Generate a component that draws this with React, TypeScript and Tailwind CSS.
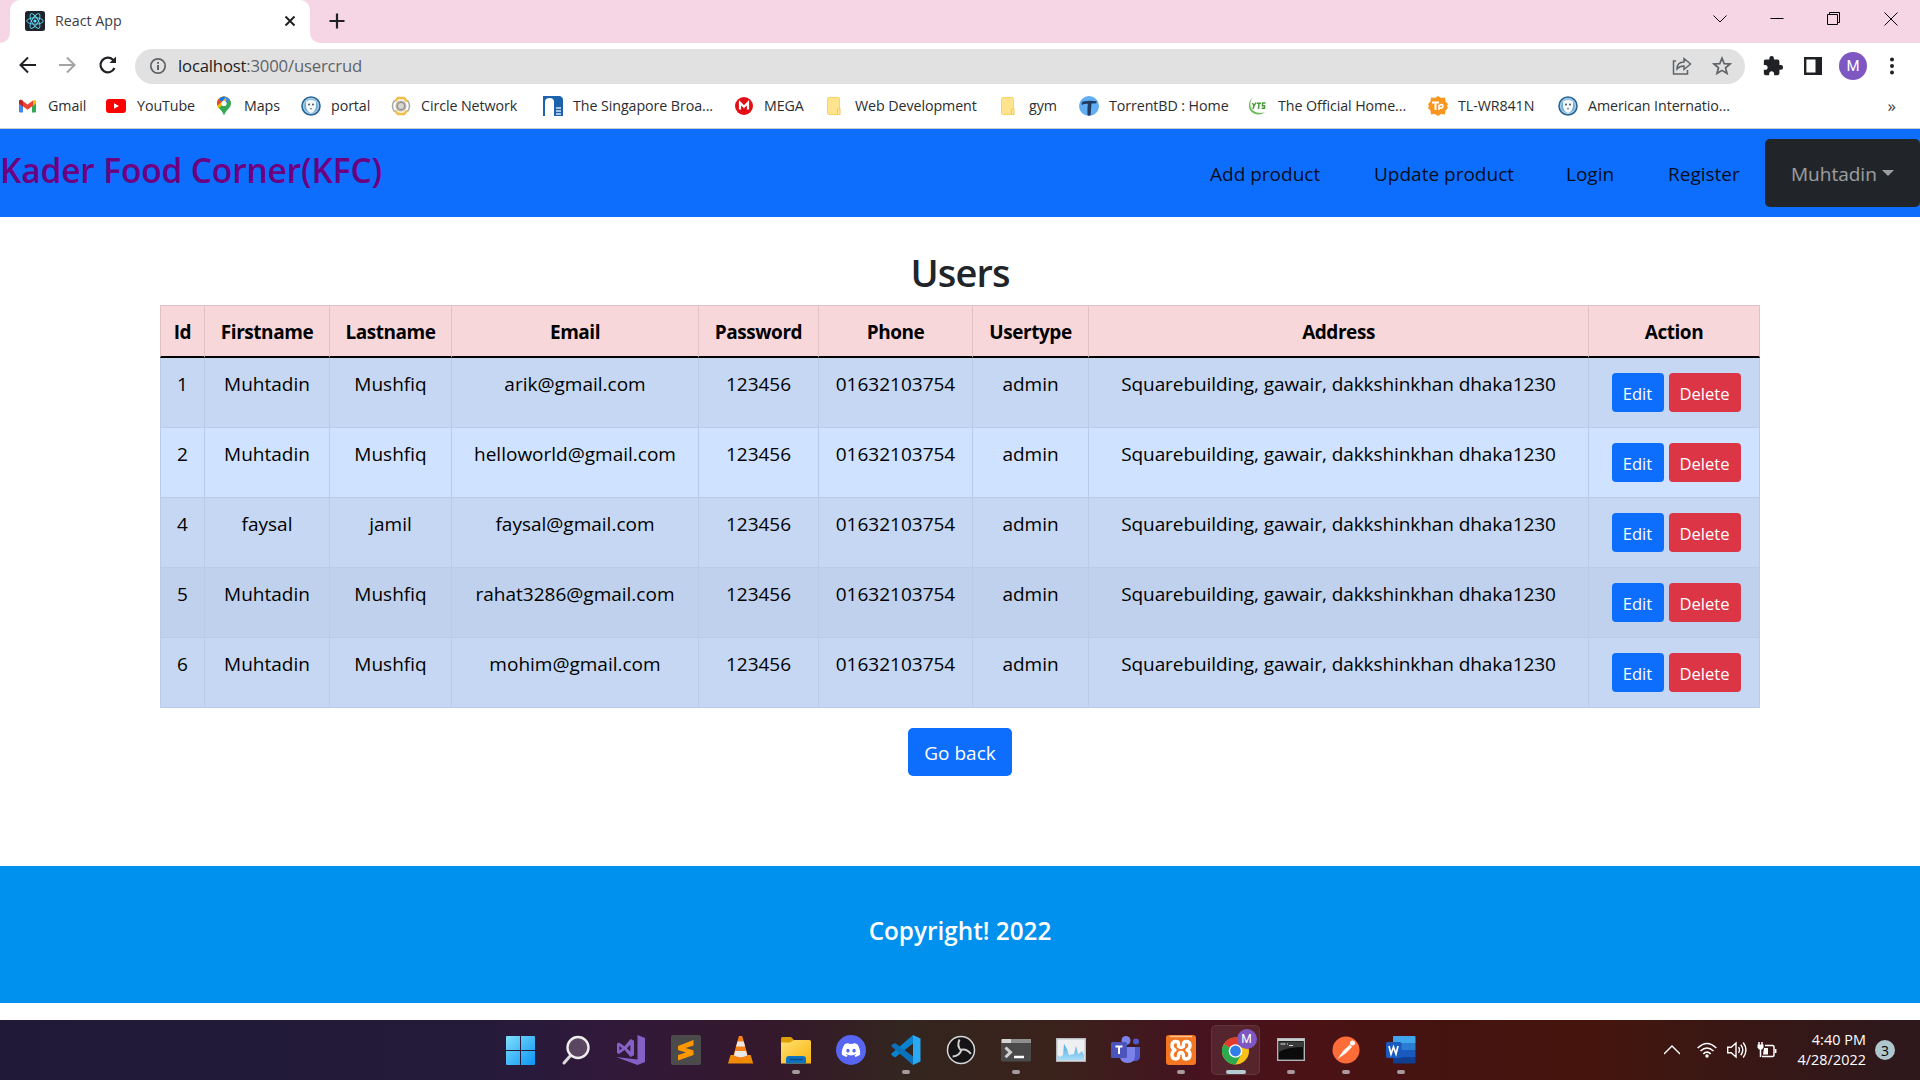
import React from "react";
import { MdExtension } from "react-icons/md";
import { FaDiscord } from "react-icons/fa";

const bookmarks = [
  { label: "Gmail", icon: "gmail", w: "w-[89px]" },
  { label: "YouTube", icon: "youtube", w: "w-[107px]" },
  { label: "Maps", icon: "maps", w: "w-[87px]" },
  { label: "portal", icon: "seal", w: "w-[90px]" },
  { label: "Circle Network", icon: "circle", w: "w-[152px]" },
  { label: "The Singapore Broa...", icon: "singapore", w: "w-[191px]" },
  { label: "MEGA", icon: "mega", w: "w-[91px]" },
  { label: "Web Development", icon: "folder", w: "w-[174px]" },
  { label: "gym", icon: "folder", w: "w-[80px]" },
  { label: "TorrentBD : Home", icon: "torrent", w: "w-[169px]" },
  { label: "The Official Home...", icon: "yts", w: "w-[180px]" },
  { label: "TL-WR841N", icon: "tplink", w: "w-[130px]" },
  { label: "American Internatio...", icon: "seal", w: "w-[180px]" },
];

function BookmarkIcon({ name }: { name: string }) {
  return (
    <svg viewBox="0 0 20 20" className="h-5 w-5 shrink-0 overflow-visible">
      {name === "gmail" && (
        <>
          <path d="M1 5v10.500a1 1 0 0 0 1 1h3V7z" fill="#4285f4" />
          <path d="M18 5v10.500a1 1 0 0 1-1 1h-3V7z" fill="#34a853" />
          <path d="M14 5.500 16 4q2-.5 2 1.700V7.500l-4 3z" fill="#fbbc04" />
          <path d="M1 7.500V5.500Q1 3.300 3.500 4l6 4.500L15 4.500V9.800l-5.500 4z" fill="#ea4335" />
          <path d="M1 7.500V5.500Q1 3.300 3.500 4L5 5.100v5.300z" fill="#c5221f" />
        </>
      )}
      {name === "youtube" && (
        <>
          <rect x="-1" y="3" width="20" height="14" rx="3" fill="#f00" />
          <path d="M7 7.200v5.600l5-2.800z" fill="#fff" />
        </>
      )}
      {name === "maps" && (
        <>
          <path d="M10 0.500a7 7 0 0 0-7 7c0 4.500 5 6 7 12 2-6 7-7.500 7-12a7 7 0 0 0-7-7z" fill="#34a853" />
          <path d="M3 7.500a7 7 0 0 0 1.600 4.800L15.400 3A7 7 0 0 0 3 7.500z" fill="#fbbc04" />
          <path d="M4.700 3a7 7 0 0 1 7.500-2.100L7.500 6.300z" fill="#1a73e8" />
          <path d="M4.700 3A7 7 0 0 0 3.300 9.500l4.200-3.200z" fill="#ea4335" />
          <path d="M12.200.9a7 7 0 0 1 3.400 2.400l-4.400 5z" fill="#4285f4" />
          <circle cx="10" cy="7.500" r="2.600" fill="#fff" />
        </>
      )}
      {name === "seal" && (
        <>
          <circle cx="10" cy="10" r="9" fill="#a5cfec" stroke="#2a6490" strokeWidth="1.600" />
          <circle cx="10" cy="10" r="6.800" fill="#6ea8d0" />
          <path d="M5 5.500q5-3.500 10 0V11q-1 5-5 6-4-1-5-6z" fill="#f3f8fb" />
          <circle cx="8" cy="8.500" r="1" fill="#47535c" />
          <circle cx="12" cy="8.500" r="1" fill="#47535c" />
          <path d="M8.800 12h2.400l-1.200 2z" fill="#7b8790" />
        </>
      )}
      {name === "circle" && (
        <>
          <path d="M4 5.500 7 2h6l3 3.500M4 14.500 7 18h6l3-3.500" stroke="#f3bd48" strokeWidth="2.600" fill="none" />
          <path d="M3.500 4.500q-4 5.500 0 11M16.500 4.500q4 5.500 0 11" stroke="#a9a9a9" strokeWidth="1.500" fill="none" />
          <circle cx="10" cy="10" r="5.500" fill="#b9b3a6" />
          <circle cx="10" cy="10" r="3.600" fill="#d8d6d0" stroke="#8c8c8c" />
        </>
      )}
      {name === "singapore" && (
        <>
          <path d="M0 0h17q3 1 3 4v16h-9V6q0-4-4.500-4T2 6v14H0z" fill="#1b63ad" />
          <path d="M13 12h5M13 15h5M13 18h5" stroke="#d6e5f4" strokeWidth="1.500" />
        </>
      )}
      {name === "mega" && (
        <>
          <circle cx="10" cy="10" r="9" fill="#e30e16" />
          <path d="M6 13.500V6.700l4 4 4-4v6.800" stroke="#fff" strokeWidth="2.200" fill="none" />
        </>
      )}
      {name === "folder" && (
        <>
          <rect x="2.500" y="1.500" width="12" height="17" rx="1" fill="#ffe38d" stroke="#fad364" />
          <path d="M12.500 18.500v-4.500q0-1.500 2.500-1.500v6z" fill="#ffe9a4" stroke="#f2c850" />
        </>
      )}
      {name === "torrent" && (
        <>
          <circle cx="10" cy="10" r="10" fill="#62aef3" />
          <path d="M3 9q-1-2.500 1-3.500 7-1.500 13.500-.3.500 1-.5 2-2.500.3-4.500.3-.5 5-.8 11.500-1.500 1-3.200 0Q8.300 12 8.800 7.700 5 7.500 3 9z" fill="#203a60" />
        </>
      )}
      {name === "yts" && (
        <>
          <path d="M4.500 1.500C-1.500 7 0 17 9 18.500q5 .5 8-2.500-4 1.500-8 .5C2 14.500.5 8 4.500 1.500z" fill="#6cbd5a" />
          <path d="m4.500 7 1.500 3 2-3.500M6 10l-1 3M8.800 7.200H13M11 7.200 10.500 13M17.500 7h-3v2.700h2v2.600H13.500" stroke="#4b9a3d" strokeWidth="1.500" fill="none" />
        </>
      )}
      {name === "tplink" && (
        <>
          <path d="M7 2 10 0l3 2 4-.5.500 4L20 8l-1 2 1 2-2.500 2.500-.5 4-4-.5-3 2-3-2-4 .5-.5-4L0 12l1-2-1-2 2.500-2.500.5-4z" fill="#fa961e" />
          <path d="M4 6.500h7M7.500 6.500V14" stroke="#fff" strokeWidth="2" fill="none" />
          <path d="M11 14V9.500q4-2 4 .5t-4 2" stroke="#fff" strokeWidth="1.600" fill="none" />
        </>
      )}
    </svg>
  );
}

function TabStrip() {
  return (
    <div className="flex h-[43px] items-start bg-[#f6d5e4] pl-[10px]">
      <div className="relative flex h-[43px] w-[300px] items-center rounded-t-[10px] bg-white px-[15px] pb-[2px]">
        <svg viewBox="0 0 10 10" className="absolute bottom-0 -left-[10px] h-[10px] w-[10px]"><path d="M10 0v10H0A10 10 0 0 0 10 0z" fill="#fff" /></svg>
        <svg viewBox="0 0 10 10" className="absolute -right-[10px] bottom-0 h-[10px] w-[10px]"><path d="M0 0v10h10A10 10 0 0 1 0 0z" fill="#fff" /></svg>
        <svg viewBox="0 0 20 20" className="h-5 w-5">
          <rect width="20" height="20" rx="2.500" fill="#20232a" />
          <g fill="none" stroke="#61dafb" strokeWidth=".9">
            <ellipse cx="10" cy="10" rx="8.300" ry="3.200" />
            <ellipse cx="10" cy="10" rx="8.300" ry="3.200" transform="rotate(60 10 10)" />
            <ellipse cx="10" cy="10" rx="8.300" ry="3.200" transform="rotate(120 10 10)" />
          </g>
          <circle cx="10" cy="10" r="1.600" fill="#61dafb" />
        </svg>
        <span className="ml-[10px] text-[14.250px] text-[#3c4043]">React App</span>
        <svg viewBox="0 0 12 12" className="-mr-px ml-auto h-3 w-3"><path d="m1.500 1.500 9 9m0-9-9 9" stroke="#202124" strokeWidth="2" /></svg>
      </div>
      <svg viewBox="0 0 16 16" className="mt-[13px] ml-[19px] h-4 w-4"><path d="M8 .5v15M.5 8h15" stroke="#202124" strokeWidth="2.200" /></svg>
      <div className="ml-auto flex pt-[11px] text-black">
        <svg viewBox="0 0 16 16" className="mr-[41px] h-4 w-4" fill="none" stroke="currentColor"><path d="m1.500 4.500 6.500 6.500 6.500-6.500" /></svg>
        <svg viewBox="0 0 16 16" className="mr-[41px] h-4 w-4" fill="none" stroke="currentColor"><path d="M1.500 7.500h13" /></svg>
        <svg viewBox="0 0 16 16" className="mr-[41px] h-4 w-4" fill="none" stroke="currentColor"><path d="M1.500 3.500h10v10h-10zM3.500 3.500v-2h10v10h-2" /></svg>
        <svg viewBox="0 0 16 16" className="mr-[21px] h-4 w-4" fill="none" stroke="currentColor"><path d="m1.500 1.500 13 13m0-13-13 13" /></svg>
      </div>
    </div>
  );
}

function AddressBar() {
  return (
    <div className="flex h-[45px] items-center pt-[1px] pl-[18px]">
      <svg viewBox="0 0 20 20" className="-mt-[2px] h-5 w-5" fill="none" stroke="#202124" strokeWidth="2"><path d="M18 10H3M10 2.500 2.500 10l7.500 7.500" /></svg>
      <svg viewBox="0 0 20 20" className="-mt-[2px] ml-[20px] h-5 w-5" fill="none" stroke="#a3a4a6" strokeWidth="2"><path d="M1 10h15M9 2.500l7.500 7.500-7.500 7.500" /></svg>
      <svg viewBox="0 0 20 20" className="-mt-[2px] ml-[20px] h-5 w-5" fill="none" stroke="#202124" strokeWidth="2.200"><path d="M16.500 13A7.300 7.300 0 1 1 15 4.800L17 7" /><path d="M18 1.500V8h-6.500z" fill="#202124" stroke="none" /></svg>
      <div className="ml-[17px] flex h-[35px] w-[1610px] items-center rounded-full bg-[#e1e1e1] pr-[13px] pl-[14px]">
        <svg viewBox="0 0 18 18" className="h-[18px] w-[18px]" fill="none" stroke="#5f6368" strokeWidth="1.700"><circle cx="9" cy="9" r="7.200" /><path d="M9 8v5M9 5v1.700" strokeWidth="2" /></svg>
        <span className="ml-[11px] text-[16.700px] tracking-[-0.18px] text-[#5f6368]"><span className="text-[#202124]">localhost</span>:3000/usercrud</span>
        <svg viewBox="0 0 20 20" className="ml-auto h-5 w-5" fill="none" stroke="#5f6368" strokeWidth="1.500"><path d="M4 5H1.500v13h14v-4" /><path d="M5 13q0-7 7-7V2.500L18.500 8 12 13.500V10q-4.500 0-7 3z" /></svg>
        <svg viewBox="0 0 20 20" className="ml-[20px] h-5 w-5" fill="none" stroke="#5f6368" strokeWidth="1.700"><path d="m10 2.200 2.200 5.400 5.800.4-4.500 3.800 1.500 5.700-5-3.100-5 3.100 1.500-5.700L2 8l5.800-.4z" /></svg>
      </div>
      <MdExtension className="ml-[17px] h-[22px] w-[22px] text-[#202124]" />
      <svg viewBox="0 0 18 18" className="ml-[20px] h-[18px] w-[18px]"><path d="M1.200 1.200h15.600v15.600H1.200z" fill="none" stroke="#202124" strokeWidth="2.400" /><path d="M11.500 0H18v18h-6.500z" fill="#202124" /></svg>
      <div className="ml-[17px] flex h-7 w-7 items-center justify-center rounded-full bg-[#7e57c2] font-[Roboto] text-[15px] text-white">M</div>
      <svg viewBox="0 0 4 18" className="ml-[23px] h-[18px] w-1" fill="#202124"><circle cx="2" cy="2.500" r="2" /><circle cx="2" cy="9" r="2" /><circle cx="2" cy="15.500" r="2" /></svg>
    </div>
  );
}

function BookmarksBar() {
  return (
    <div className="flex h-[41px] items-center border-b border-[#c9cdd2] pb-[5px] pl-[18px]">
      {bookmarks.map((b) => (
        <div key={b.label} className={`flex shrink-0 items-center gap-[10px] ${b.w}`}>
          <BookmarkIcon name={b.icon} />
          <span className="text-[14.250px] tracking-[-0.08px] whitespace-nowrap text-[#2b2d30]">{b.label}</span>
        </div>
      ))}
      <span className="ml-auto pr-[24px] text-[17px] text-[#3c4043]">»</span>
    </div>
  );
}

function Navbar() {
  return (
    <nav className="flex h-[88px] items-start justify-between bg-[#0d6efd]">
      <div className="mt-[19px] text-[33.500px] leading-[44px] font-semibold tracking-[-0.15px] text-[#6d0080]">Kader Food Corner(KFC)</div>
      <div className="mt-[10px] flex h-[68px] items-center text-[19px] text-black/90">
        <a className="w-[164px] pt-[2px]">Add product</a>
        <a className="w-[192px] pt-[2px]">Update product</a>
        <a className="w-[102px] pt-[2px]">Login</a>
        <a className="w-[97px] pt-[2px]">Register</a>
        <a className="flex h-[68px] w-[155px] items-center rounded-[5px] bg-[#212529] pl-[26px] text-white/55">
          <span className="pt-[2px]">Muhtadin</span>
          <span className="ml-[5px] border-x-[6px] border-t-[6px] border-x-transparent border-t-white/55" />
        </a>
      </div>
    </nav>
  );
}

const columns = [
  { name: "Id", w: "w-[45px]" },
  { name: "Firstname", w: "w-[125px]" },
  { name: "Lastname", w: "w-[122px]" },
  { name: "Email", w: "w-[247px]" },
  { name: "Password", w: "w-[120px]" },
  { name: "Phone", w: "w-[154px]" },
  { name: "Usertype", w: "w-[116px]" },
  { name: "Address", w: "w-[500px]" },
  { name: "Action", w: "w-[171px]" },
];

const users = [
  { id: 1, first: "Muhtadin", last: "Mushfiq", email: "arik@gmail.com", bg: "bg-[#c5d7f2]" },
  { id: 2, first: "Muhtadin", last: "Mushfiq", email: "helloworld@gmail.com", bg: "bg-[#cfe2ff]" },
  { id: 4, first: "faysal", last: "jamil", email: "faysal@gmail.com", bg: "bg-[#c5d7f2]" },
  { id: 5, first: "Muhtadin", last: "Mushfiq", email: "rahat3286@gmail.com", bg: "bg-[#bfd1ec]" },
  { id: 6, first: "Muhtadin", last: "Mushfiq", email: "mohim@gmail.com", bg: "bg-[#c5d7f2]" },
];

function UsersTable() {
  return (
    <table className="w-[1600px] table-fixed border-separate border-spacing-0 text-center text-[19px] leading-[30px] text-black">
      <thead>
        <tr className="h-[53px] bg-[#f8d7da]">
          {columns.map((c) => (
            <th key={c.name} className={`border-t border-r border-b-2 border-t-[#dfc2c4] border-r-[#dfc2c4] border-b-black p-0 pt-[2px] font-bold tracking-[-0.45px] first:border-l first:border-l-[#dfc2c4] ${c.w}`}>{c.name}</th>
          ))}
        </tr>
      </thead>
      <tbody>
        {users.map((u) => (
          <tr key={u.id} className={`h-[70px] align-top ${u.bg}`}>
            {[u.id, u.first, u.last, u.email, "123456", "01632103754", "admin", "Squarebuilding, gawair, dakkshinkhan dhaka1230"].map((v, i) => (
              <td key={i} className="border-r border-b border-[#bacbe6] p-0 pt-[11px] whitespace-nowrap first:border-l nth-8:tracking-[-0.08px]">{v}</td>
            ))}
            <td className="border-r border-b border-[#bacbe6] p-0 pt-[15px]">
              <div className="flex justify-center gap-[5px] pl-[4px] text-[16.600px] text-white">
                <button className="h-[39px] w-[52px] rounded-[4px] bg-[#0d6efd] pt-[2px]">Edit</button>
                <button className="h-[39px] w-[72px] rounded-[4px] bg-[#dc3545] pt-[2px]">Delete</button>
              </div>
            </td>
          </tr>
        ))}
      </tbody>
    </table>
  );
}

const apps = ["start", "search", "vs", "sublime", "vlc", "explorer", "discord", "vscode", "obs", "terminal", "monitor", "teams", "xampp", "chrome", "cmd", "postman", "word"];
const running = ["explorer", "vscode", "terminal", "xampp", "cmd", "postman", "word"];

function AppIcon({ name }: { name: string }) {
  if (name === "discord") {
    return <div className="flex h-[30px] w-[30px] items-center justify-center rounded-full bg-[#5865f2]"><FaDiscord className="h-5 w-5 text-white" /></div>;
  }
  return (
    <svg viewBox="0 0 30 30" className="h-[30px] w-[30px] overflow-visible">
      <defs>
        <linearGradient id="win" x1="0" y1="0" x2="1" y2="1"><stop stopColor="#7fe0fb" /><stop offset="1" stopColor="#0a93f5" /></linearGradient>
        <linearGradient id="folder" x1="0" y1="0" x2="1" y2="1"><stop stopColor="#ffe070" /><stop offset="1" stopColor="#f9b410" /></linearGradient>
        <linearGradient id="graph" x1="0" y1="0" x2="0" y2="1"><stop stopColor="#4aa8e0" /><stop offset="1" stopColor="#a8ddf8" /></linearGradient>
      </defs>
      {name === "start" && <path d="M0 2a1 1 0 0 1 1-1H14v14H0zM15 1h13a1 1 0 0 1 1 1v13h-14zM0 16h14v14h-13a1 1 0 0 1-1-1zM15 16h14v13a1 1 0 0 1-1 1h-13z" fill="url(#win)" />}
      {name === "search" && <><path d="m10 20-7 8" stroke="#dcdcdc" strokeWidth="3" strokeLinecap="round" /><circle cx="17" cy="12.500" r="10.500" fill="#5a4660" stroke="#ededed" strokeWidth="2.400" /></>}
      {name === "vs" && (
        <>
          <path d="m21.500 0 7.500 3v24l-7.500 3L0 22l21.500 2.500z" fill="#8661c5" />
          <path fillRule="evenodd" d="M1 8.500 3 7.500l5.500 3.800L14.500 4l3.500 1.700v14.600L14.500 22l-6-7L3 19l-2-1zM3.500 11v4.500L6 13.200zM14.300 9.800 11 13.200l3.300 3.300z" fill="#8661c5" />
        </>
      )}
      {name === "sublime" && <><rect width="30" height="30" rx="2" fill="#4b4b4b" /><path d="m7 11 15.500-6v5.500L14.500 13l8 2.500V20L7 25.500V20l8-2.500L7 15z" fill="#ff9800" /></>}
      {name === "vlc" && <g transform="translate(2 0) scale(.84 1)"><path d="M3 20h24l3 8.500H0z" fill="#ef8a05" /><path d="m13 1h4l7 21q-9 5-18 0z" fill="#f58018" /><path d="m11.300 6.500h7.400l1.600 5h-10.600zM8.500 16h13l1.300 4.500q-7.800 3.500-15.600 0z" fill="#e9e9e9" /></g>}
      {name === "explorer" && <><path d="M0 3.500Q0 2 1.500 2H10l3 3v5H0z" fill="#dda000" /><path d="M0 7.500h9L13 5h15.500Q30 5 30 6.500v22H0z" fill="url(#folder)" /><path d="M5 28.500V24q0-3 3-3h14q3 0 3 3v4.500z" fill="#0d73c0" /><path d="M9 24.500h13" stroke="#084d90" strokeWidth="1.500" /></>}
      {name === "vscode" && <><path d="M22 0v8.500L4 22.500.5 20V18.500z" fill="#0a84cf" /><path d="M22 30v-8.500L4 8 .5 10v1.500z" fill="#0a72bb" /><path d="m22 0 7.500 3.500v23L22 30z" fill="#2aa8f2" /></>}
      {name === "obs" && (
        <>
          <circle cx="15" cy="15" r="13.500" fill="#151316" stroke="#d8d8d8" strokeWidth="1.500" />
          <g fill="none" stroke="#cfcfcf" strokeWidth="2">
            <path d="M15 15.500Q10.500 11 13.500 4.500" />
            <path d="M15 15.500Q10.500 11 13.500 4.500" transform="rotate(120 15 15)" />
            <path d="M15 15.500Q10.500 11 13.500 4.500" transform="rotate(240 15 15)" />
          </g>
        </>
      )}
      {name === "terminal" && <><rect y="4" width="30" height="22.500" rx="1.500" fill="#4a4a4a" /><path d="M0 8V5.500Q0 4 1.500 4H30v4z" fill="#8f8f8f" /><path d="M1 4h9v4H1z" fill="#d5d5d5" /><path d="m4.500 12.500 5 4.800-5 5" stroke="#d0d0d0" strokeWidth="3" fill="none" /><path d="M13 22h10" stroke="#fff" strokeWidth="2.500" /></>}
      {name === "monitor" && <><rect x=".7" y="3.700" width="28.600" height="22.500" fill="#eef0f2" stroke="#b8bcc1" strokeWidth="1.400" /><path d="M1.500 20 4 22l3-2 1-11 3 5 2 6 5-1 2-8 2 8 2-1 2-2 2 4v5h-26.500z" fill="url(#graph)" /></>}
      {name === "teams" && <><circle cx="15" cy="5.500" r="4.500" fill="#7b83eb" /><circle cx="25" cy="6.500" r="3" fill="#5059c9" /><path d="M20 12h9v9q0 5-5 5h-4z" fill="#5059c9" /><path d="M9 12h15v9q0 7-7.500 7T9 21z" fill="#7b83eb" /><rect y="7" width="16" height="16" rx="1.500" fill="#4b53bc" /><path d="M4.500 11.500h7M8 11.500V19" stroke="#fff" strokeWidth="2" /></>}
      {name === "xampp" && (
        <>
          <rect width="30" height="30" rx="3" fill="#f37623" />
          <path d="M4 1.500h22" stroke="#ffc28e" strokeWidth="1.500" />
          <path d="M12.500 11.500V8.500Q12.500 6.500 10 6.500 6 6.500 6 10.500 6 13.500 9 15 6 16.500 6 19.500q0 4.500 4 4.500 2.500 0 2.500-2.500 0-4 2.500-4t2.500 4q0 2.500 2.500 2.500 4 0 4-4.500 0-3-3-4.500 3-1.500 3-4.500 0-4-4-4-2.500 0-2.500 2v3q-2.500 2-5 0z" fill="none" stroke="#fff" strokeWidth="3.400" strokeLinejoin="round" />
        </>
      )}
      {name === "chrome" && <><circle cx="14.500" cy="16" r="13.500" fill="#fbc116" /><path d="M14.500 16 2.800 9.250a13.500 13.500 0 0 1 23.400 0z" fill="#e33b2e" /><path d="M14.500 16 2.800 9.250A13.500 13.500 0 0 0 14.500 29.500l6-10.500z" fill="#2da94f" /><circle cx="14.500" cy="16" r="6.800" fill="#fff" /><circle cx="14.500" cy="16" r="5.400" fill="#2f7de9" /></>}
      {name === "cmd" && <><rect x="1.700" y="3.700" width="26.600" height="21.600" fill="#0b0b0b" stroke="#b0b5b8" strokeWidth="1.400" /><path d="M2 5h26" stroke="#c9ced1" strokeWidth="2" /><path d="M3 17q8-5 25-5V6.500H3z" fill="#3a3a3a" /><path d="M4.500 9h5M11 9h1M13 10.500h4" stroke="#ddd" /></>}
      {name === "postman" && <><circle cx="15" cy="15" r="13.500" fill="#ff6c37" /><path d="m6.500 24 6-8.500 6.500-6 2 2.500-6.500 6.500z" fill="#fff" /><circle cx="21.500" cy="8" r="2.500" fill="#fff" /></>}
      {name === "word" && <><path d="M7 1.500Q7 1 8 1h20.500a1 1 0 0 1 1 1v6H7z" fill="#41a5ee" /><path d="M7 8h22.500v7H7z" fill="#2b7cd3" /><path d="M7 15h22.500v7H7z" fill="#185abd" /><path d="M7 22h22.500v5.500a1 1 0 0 1-1 1H8a1 1 0 0 1-1-1z" fill="#103f91" /><rect x="0" y="7" width="15.500" height="16" rx="1.500" fill="#185abd" /><path d="m3 11 2 8 2.500-7 2.500 7 2-8" stroke="#fff" strokeWidth="1.700" fill="none" /></>}
    </svg>
  );
}

function Taskbar() {
  return (
    <div className="flex h-[60px] shrink-0 items-center bg-linear-[90deg,#201a38_0%,#241a3a_25%,#30193b_31%,#35182c_40%,#33251f_47%,#3a221b_55%,#451320_62%,#4b1216_68%,#441310_75%,#45150d_83%,#391714_90%,#2d181d_100%]">
      <div className="flex pl-[493px]">
        {apps.map((a) => (
          <div key={a} className="relative flex h-[60px] w-[55px] items-center justify-center">
            {a === "chrome" && <div className="absolute inset-x-[3px] inset-y-[5px] rounded-[5px] border border-white/8 bg-white/8" />}
            <div className="relative">
              <AppIcon name={a} />
              {a === "chrome" && <div className="absolute -top-[6px] left-[16px] flex h-[20px] w-[20px] items-center justify-center rounded-full bg-[#7e57c2] font-[Roboto] text-[12px] text-white">M</div>}
            </div>
            {running.includes(a) && <div className="absolute bottom-[6px] h-1 w-2 rounded-full bg-[#a79a9c]" />}
            {a === "chrome" && <div className="absolute bottom-[6px] h-1 w-5 rounded-full bg-[#b5cbd2]" />}
          </div>
        ))}
      </div>
      <div className="ml-auto flex items-center pr-[25px] text-white">
        <svg viewBox="0 0 16 10" className="h-[10px] w-4" fill="none" stroke="currentColor" strokeWidth="1.300"><path d="m0 9 8-8 8 8" /></svg>
        <svg viewBox="0 0 20 16" className="ml-[17px] h-4 w-5" fill="none" stroke="currentColor" strokeWidth="1.600"><path d="M.7 6q9.300-9 18.600 0M3.500 9q6.500-6 13 0M6.300 11.800q3.700-3.500 7.400 0" /><circle cx="10" cy="14" r="1.700" fill="currentColor" stroke="none" /></svg>
        <svg viewBox="0 0 20 18" className="ml-[10px] h-[18px] w-5" fill="none" stroke="currentColor" strokeWidth="1.400"><path d="M.7 6.200h3.500L9 2v14l-4.800-4.200H.7zM11.500 6.200q2 2.800 0 5.600M13.800 3.800q4 5.200 0 10.400M16.200 1.500q5.500 7.500 0 15" /></svg>
        <svg viewBox="0 0 20 16" className="ml-[10px] h-4 w-5" fill="none" stroke="currentColor" strokeWidth="1.500"><path d="M8 3.500h7.500q1.500 0 1.500 1.500v8q0 1.500-1.500 1.500H5" /><path d="M7 6h4v6.500H6z" fill="currentColor" stroke="none" /><path d="M18.700 7v4M2 0v3M5 0v3M3.500 6v9" /><path d="M.5 2.500h6v3l-1.500 2H2l-1.500-2z" fill="currentColor" stroke="none" /></svg>
        <div className="ml-[17px] w-[72px] text-right text-[14.400px] leading-5 tracking-[0.05px] whitespace-nowrap"><div>4:40 PM</div><div>4/28/2022</div></div>
        <div className="ml-[9px] flex h-5 w-5 items-center justify-center rounded-full bg-[#b0c6cd] text-[14px] text-black">3</div>
      </div>
    </div>
  );
}

export default function App() {
  return (
    <div className="flex h-[1080px] w-[1920px] flex-col overflow-hidden bg-white font-['Open_Sans',sans-serif]">
      <TabStrip />
      <AddressBar />
      <BookmarksBar />
      <Navbar />
      <main className="flex h-[649px] flex-col items-center pt-[31px]">
        <h1 className="mb-[9px] text-[38px] leading-[48px] font-semibold tracking-[-0.9px] text-[#212529]">Users</h1>
        <UsersTable />
        <button className="mt-[20px] h-[48px] w-[104px] rounded-[5px] bg-[#0d6efd] pt-[2px] text-[19px] text-white">Go back</button>
      </main>
      <footer className="flex h-[137px] items-center justify-center bg-[#0090ee] pb-[6px] text-[24.300px] font-semibold text-white">Copyright! 2022</footer>
      <div className="h-[17px]" />
      <Taskbar />
    </div>
  );
}
